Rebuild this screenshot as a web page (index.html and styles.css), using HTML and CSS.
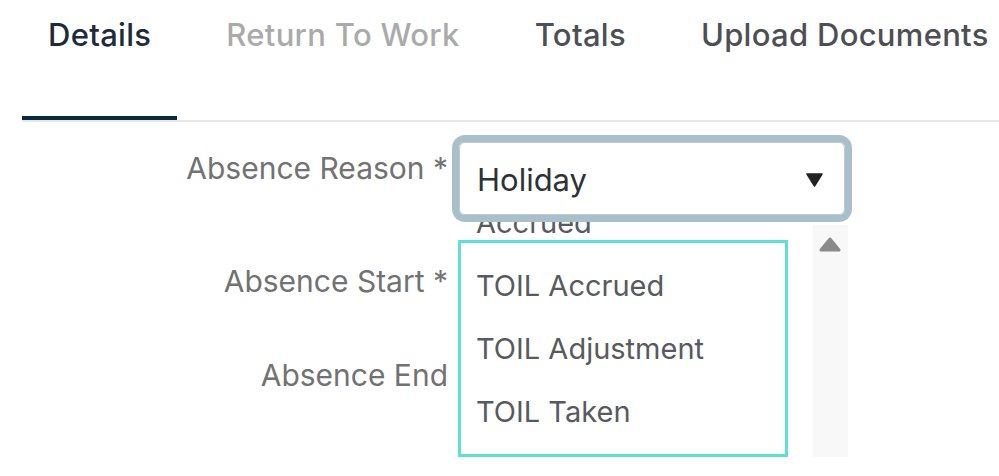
FILE: index.html
```html
<html>
<head>
  <meta charset="UTF-8">
  <title>Absence Details</title>
  <link rel="stylesheet" href="styles.css">
</head>
<body>

  <div class="tabs">
    <div class="tab activa">Details</div>
    <div class="tab deshabilitada">Return To Work</div>
    <div class="tab">Totals</div>
    <div class="tab">Upload Documents</div>
  </div>

  <form class="formulario">
    <div class="fila fila-primera">
      <label class="etiqueta">Absence Reason *</label>
      <div class="campo">
        <div class="selector">
          <span>Holiday</span>
          <svg class="flecha" width="17" height="14" viewBox="0 0 17 14">
            <path d="M1 1 L16 1 L8.5 13 Z" fill="#222" stroke="#222" stroke-linejoin="round" stroke-width="1.5"/>
          </svg>
        </div>

        <!-- Lista desplegable abierta -->
        <div class="desplegable">
          <ul class="opciones">
            <li>Accrued</li>
            <li>TOIL Accrued</li>
            <li>TOIL Adjustment</li>
            <li>TOIL Taken</li>
          </ul>
          <div class="marco-foco"></div>
          <div class="barra">
            <svg class="barra-arriba" width="22" height="15" viewBox="0 0 22 15">
              <path d="M11 2 L20 13 L2 13 Z" fill="#8a8a8a" stroke="#8a8a8a" stroke-linejoin="round" stroke-width="3"/>
            </svg>
          </div>
        </div>
      </div>
    </div>

    <div class="fila">
      <label class="etiqueta">Absence Start *</label>
      <div class="campo"></div>
    </div>

    <div class="fila">
      <label class="etiqueta">Absence End</label>
      <div class="campo"></div>
    </div>
  </form>

</body>
</html>
```

FILE: styles.css
```css
body {
  margin: 0;
  background-color: white;
  font-family: Inter, 'Noto Sans', sans-serif;
  overflow: hidden;
}

.tabs {
  display: flex;
  gap: 23px;
  margin-left: 22px;
  border-bottom: 2px solid #e8e8e8;
}

.tab {
  height: 120px;
  box-sizing: border-box;
  padding: 17px 26px 0;
  font-size: 31px;
  letter-spacing: 0.3px;
  line-height: 36px;
  font-weight: 500;
  color: #4d4f55;
  white-space: nowrap;
}

.tab.activa {
  color: #1d2b3a;
  box-shadow: inset 0 -4px 0 #0c2a3f;
}

.tab.deshabilitada {
  color: #aaaaaa;
}

.formulario {
  margin-top: 13px;
}

.fila {
  display: grid;
  grid-template-columns: 448px 401px;
  column-gap: 4px;
  height: 62px;
  margin-bottom: 32px;
}

.fila-primera {
  height: 87px;
  margin-bottom: 29px;
}

.etiqueta {
  text-align: right;
  font-size: 30px;
  line-height: 40px;
  padding-top: 10px;
  color: #727272;
  white-space: nowrap;
}

.fila-primera .etiqueta {
  padding-top: 13px;
}

.campo {
  position: relative;
}

.selector {
  margin: 7px 8px 7px 7px;
  height: 73px;
  box-sizing: border-box;
  border: 1px solid #bccbd3;
  border-radius: 6px;
  box-shadow: 0 0 0 7px #a9c0cb;
  display: flex;
  align-items: center;
  justify-content: space-between;
  padding: 2px 21px 0 17px;
  font-size: 31px;
  color: #2f3136;
}

.flecha {
  display: block;
}

.desplegable {
  position: absolute;
  top: 87px;
  left: 6px;
  width: 390px;
  height: 236px;
  background-color: white;
  overflow: hidden;
}

.opciones {
  list-style: none;
  margin: -31px 0 0;
  padding: 0;
}

.opciones li {
  height: 63px;
  line-height: 63px;
  padding-left: 18px;
  font-size: 29px;
  color: #575a60;
  white-space: nowrap;
}

.marco-foco {
  position: absolute;
  top: 18px;
  left: 0;
  width: 330px;
  height: 217px;
  box-sizing: border-box;
  border: 3px solid #5fe0d5;
}

.barra {
  position: absolute;
  top: 3px;
  right: 0;
  width: 35px;
  bottom: 1px;
  background-color: #f8f8f8;
}

.barra-arriba {
  display: block;
  margin: 12px 0 0 6px;
}
```
